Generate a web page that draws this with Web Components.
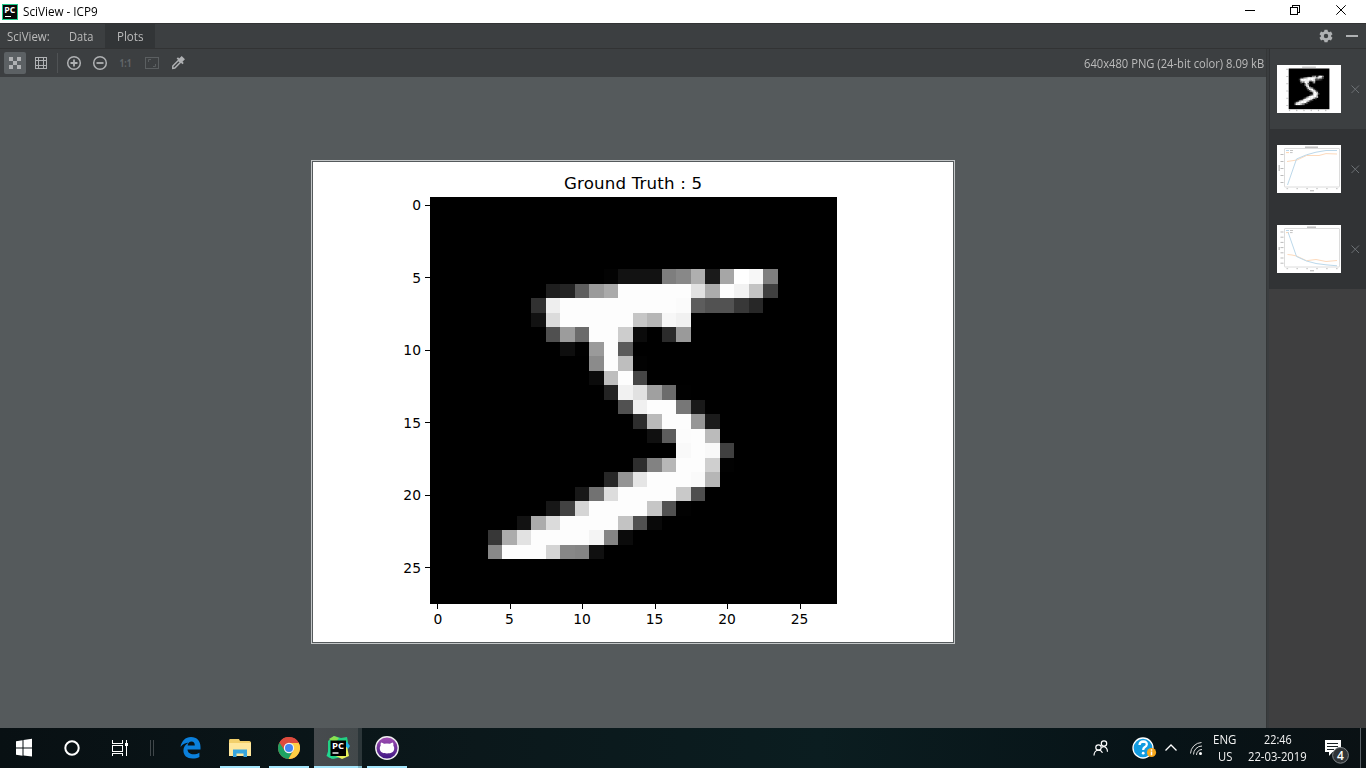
<!DOCTYPE html>
<html lang="en"><head><meta charset="utf-8"><title>SciView - ICP9</title>
<style>html,body{margin:0;height:100%;overflow:hidden;background:#3c3f41}body{font-family:"Open Sans","Noto Sans",sans-serif}</style></head>
<body><sci-desktop></sci-desktop>
<script>
const define=(name,html,init)=>{
  const t=document.createElement('template');t.innerHTML=html;
  customElements.define(name,class extends HTMLElement{
    constructor(){super();this.attachShadow({mode:'open'}).append(t.content.cloneNode(true));}
    connectedCallback(){if(init)init.call(this,this.shadowRoot);}
  });
};
// Grey levels of the digit: row -> [first column, values]
const DIGIT={5:[12,3,18,18,18,126,136,175,26,166,255,247,127],6:[8,30,36,94,154,170,253,253,253,253,253,225,172,253,242,195,64],
7:[7,49,238,253,253,253,253,253,253,253,253,251,93,82,82,56,39],8:[7,18,219,253,253,253,253,253,198,182,247,241],
9:[8,80,156,107,253,253,205,11,0,43,154],10:[9,14,1,154,253,90],11:[11,139,253,190,2],12:[11,11,190,253,70],
13:[12,35,241,225,160,108,1],14:[13,81,240,253,253,119,25],15:[14,45,186,253,253,150,27],16:[15,16,93,252,253,187],
17:[17,249,253,249,64],18:[14,46,130,183,253,253,207,2],19:[12,39,148,229,253,253,253,250,182],
20:[10,24,114,221,253,253,253,253,201,78],21:[8,23,66,213,253,253,253,253,198,81,2],22:[6,18,171,219,253,253,253,253,195,80,9],
23:[4,55,172,226,253,253,253,253,244,133,11],24:[4,136,253,253,253,212,135,132,16]};
// "grow" makes neighbouring cells overlap, so that no seams show when scaled down
const digitCells=grow=>{let s='';for(const r in DIGIT){const [c,...v]=DIGIT[r];const y=Math.floor(35+r*14.5),h=Math.floor(35+(+r+1)*14.5)-y+grow;
  v.forEach((g,i)=>{const x=Math.floor(117+(c+i)*14.5),w=Math.floor(117+(c+i+1)*14.5)-x+grow;s+=`<rect x="${x}" y="${y}" width="${w}" height="${h}" fill="rgb(${g},${g},${g})"/>`;});}return s;};

// Single line of text squeezed or stretched to a given advance width
define('fit-text','<style>:host{display:block;white-space:nowrap;flex:none}span{display:inline-block;transform-origin:0 50%}</style><span><slot></slot></span>',function(r){
  const w=+this.getAttribute('w'),s=r.querySelector('span');this.style.width=w+'px';s.style.transform=`scaleX(${w/s.offsetWidth})`;});

define('digit-plot','<style>:host{display:block}svg{display:block;width:100%;height:100%}text{font-family:"DejaVu Sans",sans-serif;font-size:13.89px;fill:#000}.t{font-size:16.67px}</style><svg viewBox="0 0 640 480"></svg>',function(r){
  const mini=this.hasAttribute('mini');let s='<rect width="640" height="480" fill="#fff"/><g shape-rendering="'+(mini?'auto':'crispEdges')+'"><rect x="117" y="35" width="407" height="407" fill="#000"/>';
  s+=mini?'<filter id="soft"><feGaussianBlur stdDeviation="3"/></filter><g filter="url(#soft)">'+digitCells(4)+'</g>':digitCells(0);
  for(let i=0;i<6;i++){const p=Math.floor(124.5+i*72.5),q=Math.round(42.5+i*72.5);s+=`<rect x="${p}" y="442" width="1" height="5"/><rect x="112" y="${q}" width="5" height="1"/>`;}
  s+='</g>';
  if(mini){s+='<g fill="#aaa"><rect x="251" y="17" width="138" height="9"/>';for(let i=0;i<6;i++)s+=`<rect x="${119+i*72.5}" y="452" width="12" height="9"/><rect x="94" y="${38+i*72.5}" width="13" height="9"/>`;s+='</g>';}
  else{s+='<text class="t" x="320" y="27" text-anchor="middle" textLength="138">Ground Truth : 5</text>';
  for(let i=0;i<6;i++)s+=`<text x="${(i?124:125)+i*72.5}" y="462" text-anchor="middle">${i*5}</text><text x="108" y="${48+i*72.5}" text-anchor="end">${i*5}</text>`;}
  r.querySelector('svg').innerHTML=s;});

define('curve-thumb','<style>:host{display:block}svg{display:block}</style><svg width="64" height="48" viewBox="0 0 64 48"></svg>',function(r){
  const loss=this.getAttribute('kind')==='loss';
  let s='<rect width="64" height="48" fill="#fff"/><rect x="7.5" y="3.5" width="55" height="38.5" rx=".5" fill="none" stroke="#dcdcdc"/>';
  s+=`<rect x="${loss?30:28}" y="1.5" width="${loss?9:13}" height="1.4" fill="#bcbcbc"/><rect x="33" y="45" width="4" height="1.4" fill="#c4c4c4"/><rect x="1.5" y="${loss?22:20}" width="1.4" height="${loss?3:6}" fill="#c4c4c4"/>`;
  for(let i=0;i<6;i++)s+=`<rect x="${9.5+i*9.9}" y="43" width="1.6" height="1.2" fill="#ccc"/>`;
  for(let i=0;i<(loss?7:5);i++)s+=`<rect x="3.5" y="${loss?6.5+i*5.2:9+i*7}" width="3" height="1" fill="#bbb"/>`;
  s+='<path d="M9 5.5h3" stroke="#b9d7ec"/><path d="M9 7.6h3" stroke="#ffd5b0"/><path d="M13 5.5h3M13 7.6h2.6" stroke="#c4c4c4"/>';
  s+=loss?'<path d="M10.5 29.5L15 30L19.5 31L29.5 35.7L39 34.5L49 36.5L60 35.5" fill="none" stroke="#fddabc"/><path d="M11 7L19.5 31.5L29.5 36L39 38.5L49 39.8L60 40.8" fill="none" stroke="#bcd8ea"/>'
   :'<path d="M10 16.5L20 15L29.5 10.5L42 10.5L49 8.6L60 9" fill="none" stroke="#fddabc"/><path d="M10.5 40L19.5 14L29.5 9.8L39 7.2L49 5.5L60 5.5" fill="none" stroke="#bcd8ea"/>';
  r.querySelector('svg').innerHTML=s;});

define('plot-item','<style>:host{display:flex;align-items:center;height:80px;padding-left:7px;background:#313335;box-sizing:border-box}:host([selected]){background:#3c3f41}::slotted(*){width:64px;height:48px}svg{margin-left:10px}</style><slot></slot><svg width="9" height="9" viewBox="0 0 9 9" fill="none" stroke="#6c7174"><path d="M.5.5l7.5 7.500M8 .5L.5 8"/></svg>');

define('window-title',`<style>:host{display:flex;height:23px;background:#fff;color:#000;font-size:12px;line-height:22px;align-items:center}
.c{margin-left:auto;display:flex;align-items:center}svg{display:block;flex:none}.logo{margin:0 5px 0 2px}.logo text{font:bold 8px "Open Sans",sans-serif;fill:#fff}</style>
<svg class="logo" width="16" height="16"><rect width="16" height="16" fill="#20c98a"/><rect x="1" y="1" width="14" height="14" fill="#080808"/><text x="2.2" y="8.600" textLength="11" lengthAdjust="spacingAndGlyphs">PC</text><path d="M3 12.500h6" stroke="#fff"/></svg>
<fit-text w="75">SciView - ICP9</fit-text>
<div class="c"><svg width="138" height="23" fill="none" stroke="#000" shape-rendering="crispEdges"><path d="M17 10.500h10"/><path d="M62.500 7.500h7v7h-7zM64.500 7.500v-2h7v7h-2"/><path shape-rendering="auto" d="M108.300 5.300l9.400 9.400M117.700 5.300l-9.400 9.400"/></svg></div>`);

define('tool-tabs',`<style>:host{display:flex;height:26px;box-sizing:border-box;border-top:1px solid #323334;border-bottom:1px solid #323334;background:#3c3f41;color:#bbb;font-size:12px;line-height:25px}
.l{padding-left:7px;width:43px}.tab{padding:0 12px}.on{background:#323537}.r{margin-left:auto}svg{display:block}</style>
<div class="l"><fit-text w="43">SciView:</fit-text></div><div class="tab" style="margin-left:7px"><fit-text w="24">Data</fit-text></div><div class="tab on"><fit-text w="26">Plots</fit-text></div>
<svg class="r" width="49" height="24"><g transform="translate(9 12)" fill="#afb1b3"><path fill-rule="evenodd" d="M-1.5-6.3h3l.4 1.8 1.3.7 1.8-.6 1.5 2.600-1.400 1.300v1l1.400 1.300L5 4.400l-1.800-.6-1.300.7-.4 1.800h-3l-.4-1.800-1.300-.7-1.800.6-1.500-2.600L-5.100.5v-1l-1.400-1.300L-5-4.400l1.800.6 1.300-.7zM0-2.200A2.200 2.200 0 1 0 0 2.200 2.200 2.200 0 1 0 0-2.200z"/></g><path d="M29 12h12" stroke="#afb1b3" stroke-width="2"/></svg>`);

define('plot-toolbar',`<style>:host{display:flex;height:28px;background:#3c3f41;color:#bbb;font-size:12px;line-height:30px}fit-text{margin:0 2px 0 auto}svg{display:block}.o{font:bold 10px "Open Sans",sans-serif;fill:#626669}</style>
<svg width="200" height="28" fill="none" stroke="#afb1b3"><rect x="4" y="3" width="22" height="22" rx="2" fill="#5c6164" stroke="none"/>
<path fill="#afb1b3" stroke="none" shape-rendering="crispEdges" d="M9 8h4v4H9zM17 8h4v4h-4zM13 12h4v4h-4zM9 16h4v4H9zM17 16h4v4h-4z"/>
<path shape-rendering="crispEdges" d="M35.500 8.500h11v11h-11zM38.500 8v12M43.500 8v12M35 11.500h12M35 16.500h12"/>
<path d="M57.500 4v20" stroke="#505355"/>
<g stroke-width="1.500"><circle cx="74" cy="14" r="6.300"/><path d="M70.500 14h7M74 10.500v7" stroke-width="1.800"/><circle cx="100" cy="14" r="6.300"/><path d="M96.500 14h7" stroke-width="1.800"/></g>
<text class="o" stroke="none" x="119.500" y="17.700" textLength="12" lengthAdjust="spacingAndGlyphs">1:1</text>
<g stroke="#5b5f61"><rect x="145.500" y="8.500" width="13" height="11"/><path d="M148.500 13v-2.500h2.500M155.500 15v2.500H153"/></g>
<path d="M172.800 19.300v-2.300l5.700-5.700 2 2-5.700 5.700-2 .3z" stroke-width="1.500"/><path d="M177.300 8.800l5.800 5.800" stroke-width="1.900"/><path d="M180.300 11.700l3-3" stroke-width="4.600"/></svg>
<fit-text w="180">640x480 PNG (24-bit color) 8.09 kB</fit-text>`);

define('plot-canvas',`<style>:host{display:flex;align-items:flex-start;justify-content:center;flex:1;background:#555a5c;padding-top:83px}.f{width:640px;height:480px;border:1px solid #c3c6c7;padding:1px;background:#555a5c}</style><div class="f"><digit-plot></digit-plot></div>`);

define('task-app',`<style>:host{display:flex;flex-direction:column;align-items:center;justify-content:center;width:40px;height:40px;box-sizing:border-box;flex:none}:host([open]){border-bottom:2px solid #a4e6fc}::slotted(svg){display:block}:host([open]) ::slotted(svg){margin-top:2px}</style><slot></slot>`);

define('task-bar',`<style>:host{display:flex;height:40px;background:linear-gradient(90deg,#081013,#0b181b 35%,#0b1d20 60%,#071317 85%,#0a1114);color:#f4f4f4;font-size:12px;position:relative}
svg{display:block}.tx{display:flex;flex-direction:column;align-items:center;line-height:17px;padding-top:3px;box-sizing:border-box}.pc{font:bold 9px "Open Sans",sans-serif;fill:#fff}.n{font:600 12px "Open Sans",sans-serif;fill:#fff}
.act{background:linear-gradient(90deg,#474b4e,#42484a)}.right{margin-left:auto;display:flex}</style>
<svg width="171" height="40" fill="none" stroke="#fff"><path fill="#fff" stroke="none" d="M16 13.200l6.500-1v7.300H16zM23.500 12l8.500-1.200v8.700h-8.500zM16 20.500h6.500v7.300l-6.500-1zM23.500 20.500H32v8L23.500 27.500z"/>
<circle cx="72" cy="20" r="6.700" stroke-width="2"/><path shape-rendering="crispEdges" d="M112.500 12v3.500h10V12M112.500 28v-2.500h10V28M112.500 17v6h10v-6zM126.500 12v16"/><path d="M125 15h3v3h-3z" fill="#fff" stroke="none"/>
<path shape-rendering="crispEdges" d="M150.500 12v16M153.500 12v16" stroke="#40474a"/></svg>
<task-app><svg width="22" height="24"><path fill="#0b80dc" d="M.5 11C1.500 5 5.500 1 11 1c6 0 9.500 4 9.500 10v2.500h-13c.2 3.200 2.700 4.800 6 4.800 2.200 0 4-.6 5.900-1.600v4.400c-2 1-4.300 1.500-6.800 1.500-5.700 0-9.200-3-9.200-8 0-3.600 2.200-6.500 5.500-8C5.600 6.800 2.700 8.300.5 11zM7.600 9.500h7.200c0-2.700-1.200-4-3.300-4s-3.500 1.500-3.900 4z"/></svg></task-app>
<task-app open style="margin-left:9px"><svg width="22" height="20"><path d="M0 2.500Q0 1 1 1h9l1 2h9.500L22 4v14H0z" fill="#f2cf6b"/><path d="M0 5h22v13H0z" fill="#ffe79c"/><path d="M4 19v-7.500h14V19h-3.500v-3.500h-7V19z" fill="#38a6df"/></svg></task-app>
<task-app open style="margin-left:9px"><svg width="22" height="22"><circle cx="11" cy="11" r="11" fill="#dd4b3e"/><path d="M1.500 5.500A11 11 0 0 0 10.500 22l4.500-8.500L7 14z" fill="#1da362"/><path d="M20.500 5.500A11 11 0 0 1 10.500 22l5-8.500L11 5.500z" fill="#ffce44"/><path d="M1.500 5.500A11 11 0 0 1 20.700 6H11L7 13z" fill="#dd4b3e"/><circle cx="11" cy="11" r="5.200" fill="#f3f3f3"/><circle cx="11" cy="11" r="4" fill="#4285f4"/></svg></task-app>
<task-app open class="act" style="margin-left:5px;width:44px"><svg style="margin-left:4px" width="25" height="24"><path d="M2 5l6-5 7 2 6-1 1 5-2 14-13 3-5-2z" fill="#22cf83"/><path d="M3 3l5-3 5 2-4 5z" fill="#8be04f"/><path d="M17 7l4-1 3 4-4 6z" fill="#1fb3ea"/><path d="M7 19l14-8 2 9-7 3-4-2z" fill="#e9f25a"/><path d="M.5 20l3-9 3 12z" fill="#20d790"/><rect x="4.500" y="4.500" width="15.500" height="15.500" fill="#000"/><text class="pc" x="6" y="13" textLength="12" lengthAdjust="spacingAndGlyphs">PC</text><path d="M6.500 17h6" stroke="#fff" stroke-width="1.400"/></svg></task-app>
<task-app open style="width:4px;background:#2c3639;border-color:#84bccb"></task-app>
<task-app open style="margin-left:5px"><svg width="24" height="24"><defs><linearGradient id="g" x2="0" y2="1"><stop stop-color="#a550b5"/><stop offset="1" stop-color="#3c1682"/></linearGradient></defs><circle cx="12" cy="12" r="11.200" fill="url(#g)" stroke="#eee" stroke-width="1.400"/><path fill="#fff" d="M6 6.500q2 .2 3 1.300 3-.6 6 0 1-1.100 3-1.300.7 1.800.3 3 1.200 1.500.9 3.500c-.5 3.500-3.400 4.400-7.200 4.400S5.300 16.500 4.800 13q-.3-2 .9-3.500-.4-1.200.3-3z"/></svg></task-app>
<div class="right"><svg width="130" height="40" fill="none" stroke="#fff">
<g stroke-width="1.200"><circle cx="18.500" cy="19.500" r="2.700"/><path d="M14 27.500c0-3 2-5.300 4.500-5.300 1.700 0 3.200 1 4 2.600"/><circle cx="24" cy="15.500" r="2.700"/><path d="M21.500 19.500c3.500-2.300 6 .7 6 4.300"/></g>
<circle cx="63" cy="20" r="10" fill="#129be0" stroke="#fff" stroke-width="1.300"/><path d="M59.500 17q.3-3.500 3.800-3.500 3.700.2 3.500 3-.1 1.500-2.200 2.800-1.400.9-1.400 2.600" stroke-width="2.300"/><circle cx="63.200" cy="25.200" r="1.400" fill="#fff" stroke="none"/><circle cx="71.500" cy="24.500" r="4.600" fill="#f8a81b" stroke="none"/><path d="M71.500 23.500v3.800M71.500 21.300v1.400" stroke-width="1.500"/>
<path d="M85.500 22.500l5.500-5.500 5.500 5.500" stroke-width="1.300"/>
<g stroke-width="1" stroke="#ddd"><path d="M110.500 25.500A11.500 11.500 0 0 1 121.500 14.500M113.500 26.500a8.500 8.500 0 0 1 8.500-8.500M116.500 27a5.500 5.500 0 0 1 5.500-5.500"/></g><circle cx="120.500" cy="25.500" r="1.500" fill="#fff" stroke="none"/></svg>
<div class="tx" style="margin-left:3px;width:23px"><fit-text w="23">ENG</fit-text><fit-text w="14">US</fit-text></div>
<div class="tx" style="margin-left:12px;width:59px"><fit-text w="28">22:46</fit-text><fit-text w="59">22-03-2019</fit-text></div>
<svg width="59" height="40"><path d="M18 12h16v12h-8.500l-3.500 4v-4h-4z" fill="#fff"/><path shape-rendering="crispEdges" d="M20 15.500h11M20 18.500h11M20 21.500h7" stroke="#182023"/><circle cx="33.500" cy="27.300" r="7.900" fill="#303437" stroke="#80868a"/><text class="n" x="30" y="31.500">4</text><path d="M53.500 0v40" stroke="#596166" shape-rendering="crispEdges"/></svg></div>`);

define('sci-desktop',`<style>:host{display:flex;flex-direction:column;width:1366px;height:768px}.m{display:flex;flex:1;min-height:0}.p{display:flex;flex-direction:column;width:1266px}.s{flex:1;border-left:1px solid #353738;padding-left:2px;background:linear-gradient(90deg,#3a3d3f 2px,#3f3f40 2px)}.i{border-left:1px solid #303234}</style>
<window-title></window-title><tool-tabs></tool-tabs><div class="m"><div class="p"><plot-toolbar></plot-toolbar><plot-canvas></plot-canvas></div>
<div class="s"><div class="i"><plot-item selected><digit-plot mini></digit-plot></plot-item><plot-item><curve-thumb kind="acc"></curve-thumb></plot-item><plot-item><curve-thumb kind="loss"></curve-thumb></plot-item></div></div></div><task-bar></task-bar>`);
</script></body></html>
